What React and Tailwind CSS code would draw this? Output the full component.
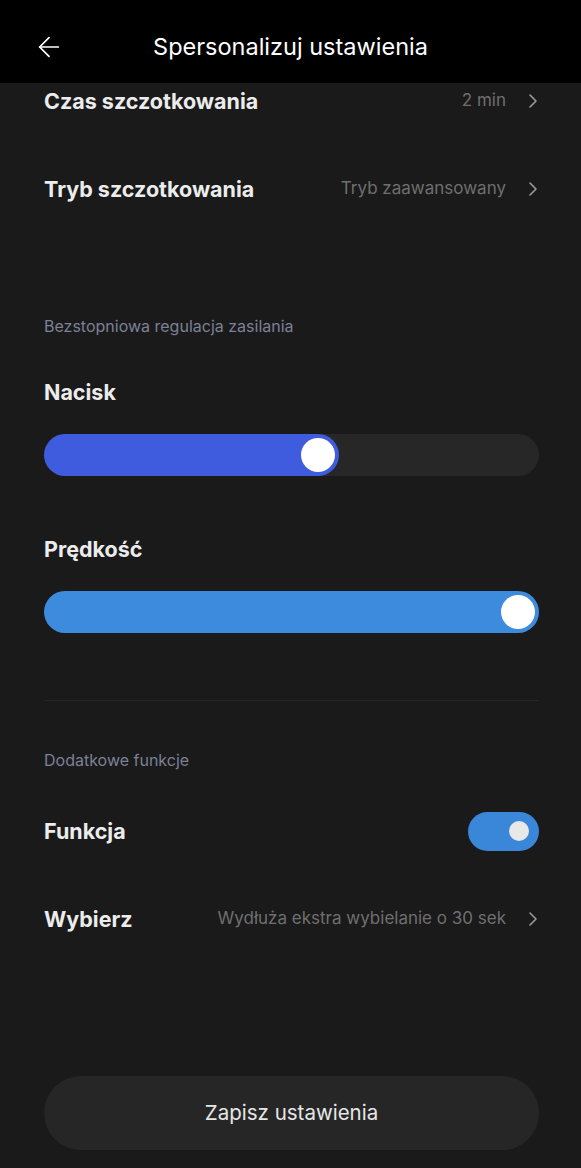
import { ArrowLeft, ChevronRight } from 'lucide-react';

function NavRow({ label, value, className = '' }) {
    return (
        <div className={`h-[88px] flex items-center justify-between ${className}`}>
            <span className="text-[21.5px] font-bold text-[#ececec]">{label}</span>
            <div className="flex items-center gap-[15px]">
                <span className="text-[17px] text-[#6f6f6f]">{value}</span>
                <ChevronRight className="w-[24px] h-[24px] text-[#9a9a9a] -mr-[6px]" strokeWidth={1.6} />
            </div>
        </div>
    );
}

function Slider({ percent, color }) {
    return (
        <div className="h-[42px] rounded-full bg-[#272727] relative">
            <div
                className="h-full rounded-full flex justify-end items-center p-[4px]"
                style={{ width: `${percent}%`, backgroundColor: color }}
            >
                <div className="w-[34px] h-[34px] rounded-full bg-white" />
            </div>
        </div>
    );
}

export default function App() {
    return (
        <div className="w-[581px] h-[1168px] bg-[#1a1a1a] flex flex-col overflow-hidden" style={{ fontFamily: 'Inter, "Noto Sans", sans-serif' }}>
            {/* Header */}
            <div className="h-[83px] bg-black relative flex items-center justify-center shrink-0 z-10">
                <ArrowLeft className="absolute left-[33px] top-[31px] w-[32px] h-[32px] text-white" strokeWidth={1.3} />
                <h1 className="text-[23.5px] text-white mt-[10px]">Spersonalizuj ustawienia</h1>
            </div>

            <div className="flex-1 overflow-hidden px-[44px] pr-[42px] flex flex-col">
                <NavRow label="Czas szczotkowania" value="2 min" className="-mt-[26px]" />
                <NavRow label="Tryb szczotkowania" value="Tryb zaawansowany" />

                <p className="text-[16px] text-[#7c8098] mt-[83px] leading-[20px]">Bezstopniowa regulacja zasilania</p>

                <p className="text-[21.5px] font-bold text-[#ececec] mt-[44px] leading-[24px]">Nacisk</p>
                <div className="mt-[30px]">
                    <Slider percent={59.6} color="#405cde" />
                </div>

                <p className="text-[21.5px] font-bold text-[#ececec] mt-[61px] leading-[24px]">Prędkość</p>
                <div className="mt-[30px]">
                    <Slider percent={100} color="#3d8bdd" />
                </div>

                <div className="border-t border-[#262626] mt-[67px]" />

                <p className="text-[16px] text-[#7c8098] mt-[49px] leading-[20px]">Dodatkowe funkcje</p>

                <div className="h-[88px] mt-[17px] flex items-center justify-between">
                    <span className="text-[21.5px] font-bold text-[#ececec]">Funkcja</span>
                    <div className="w-[71px] h-[39px] rounded-full bg-[#3a86d8] flex items-center justify-end pr-[10px]">
                        <div className="w-[20px] h-[20px] rounded-full bg-[#e8e8e8]" />
                    </div>
                </div>
                <NavRow label="Wybierz" value="Wydłuża ekstra wybielanie o 30 sek" />

                <button className="mt-[113px] h-[74px] w-full rounded-full bg-[#262626] text-[20.5px] text-[#e6e6e6]">
                    Zapisz ustawienia
                </button>
            </div>
        </div>
    );
}
